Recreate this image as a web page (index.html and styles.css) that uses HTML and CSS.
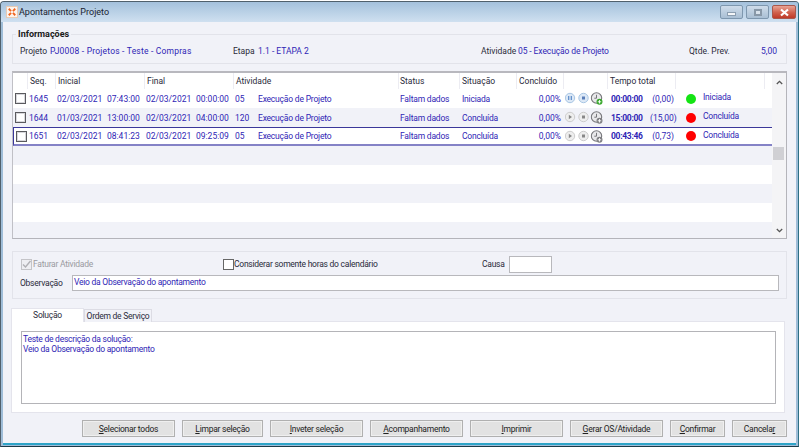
FILE: index.html
```html
<!DOCTYPE html>
<html lang="pt">
<head>
<meta charset="utf-8">
<title>Apontamentos Projeto</title>
<link rel="stylesheet" href="styles.css">
</head>
<body>
<svg class="defs" width="0" height="0">
  <defs>
    <symbol id="clock" viewBox="0 0 13 13">
      <circle cx="6" cy="6" r="5.200" fill="#e8e8ea" stroke="#77777b" stroke-width="1.100"/>
      <path d="M6 2.800V6.200H3.800" fill="none" stroke="#77777b" stroke-width="1"/>
    </symbol>
  </defs>
</svg>
<main class="window">
  <header class="titlebar">
    <svg class="appicon" width="12" height="12" viewBox="0 0 13 13"><rect x=".5" y=".5" width="12" height="12" fill="#fdf3ec" stroke="#e8c8b0"/><path d="M3 3l2.500 2.500M10 3L7.500 5.500M3 10l2.500-2.500M10 10L7.500 7.500" stroke="#f0641e" stroke-width="2"/></svg>
    <span class="wintitle">Apontamentos Projeto</span>
    <div class="wincontrols">
      <span class="winbtn"><i class="minglyph"></i></span>
      <span class="winbtn"><i class="maxglyph"></i></span>
      <span class="winbtn closebtn"><svg width="11" height="9" viewBox="0 0 11 9"><path d="M2 1.500l7 6M9 1.500l-7 6" stroke="#fff" stroke-width="2.200"/></svg></span>
    </div>
  </header>
  <div class="client">
    <section class="panel info">
      <h2 class="legend">Informações</h2>
      <div class="inforow">
        <span class="lbl l-proj">Projeto</span><span class="val v-proj">PJ0008 - Projetos - Teste - Compras</span>
        <span class="lbl l-etapa">Etapa</span><span class="val v-etapa">1.1 - ETAPA 2</span>
        <span class="lbl l-ativ">Atividade</span><span class="val v-ativ">05 - Execução de Projeto</span>
        <span class="lbl l-qtde">Qtde. Prev.</span><span class="val v-qtde">5,00</span>
      </div>
    </section>

    <section class="grid">
      <div class="gridbody">
        <div class="ghead">
          <span class="hc hc-check"></span><span class="hc hc-seq">Seq.</span><span class="hc hc-ini">Inicial</span><span class="hc hc-fin">Final</span><span class="hc hc-ativ">Atividade</span><span class="hc hc-status">Status</span><span class="hc hc-sit">Situação</span><span class="hc hc-conc">Concluído</span><span class="hc hc-ic"></span><span class="hc hc-tempo">Tempo total</span><span class="hc hc-ind"></span><span class="hc hc-last"></span>
        </div>

        <div class="row">
          <span class="cb"></span><span>1645</span><span>02/03/2021</span><span class="t">07:43:00</span><span>02/03/2021</span><span class="t">00:00:00</span><span>05</span><span class="tx">Execução de Projeto</span><span class="tx">Faltam dados</span><span class="tx">Iniciada</span><span class="pct">0,00%</span>
          <span class="icons">
            <svg width="38" height="13" viewBox="0 0 38 13"><circle cx="5" cy="6" r="4.700" fill="#dce8f6" stroke="#a8c6e4"/><path d="M3.700 4v4M6.300 4v4" stroke="#5a8ac8" stroke-width="1.200"/><circle cx="18.500" cy="6" r="4.700" fill="#dce8f6" stroke="#a8c6e4"/><rect x="17" y="4.500" width="3" height="3" fill="#5a7eb8"/><use href="#clock" x="25.500" y="0" width="13" height="13"/><circle cx="34.500" cy="9.800" r="3" fill="#3aa82e"/><path d="M32.800 9.800h3.400M34.500 8.100v3.400" stroke="#fff" stroke-width=".9"/></svg>
          </span>
          <span class="tt">00:00:00</span><span class="qty">(0,00)</span><span class="dot green"></span><span class="ind">Iniciada</span>
        </div>

        <div class="row alt">
          <span class="cb"></span><span>1644</span><span>01/03/2021</span><span class="t">13:00:00</span><span>02/03/2021</span><span class="t">04:00:00</span><span>120</span><span class="tx">Execução de Projeto</span><span class="tx">Faltam dados</span><span class="tx">Concluída</span><span class="pct">0,00%</span>
          <span class="icons">
            <svg width="38" height="13" viewBox="0 0 38 13"><circle cx="5" cy="6" r="4.700" fill="#eeeeee" stroke="#cccccc"/><path d="M3.800 3.800L7 6L3.800 8.200z" fill="#888"/><circle cx="18.500" cy="6" r="4.700" fill="#eeeeee" stroke="#cccccc"/><rect x="17" y="4.500" width="3" height="3" fill="#888"/><use href="#clock" x="25.500" y="0" width="13" height="13"/><circle cx="34.500" cy="9.800" r="3" fill="#808084"/><path d="M32.800 9.800h3.400M34.500 8.100v3.400" stroke="#fff" stroke-width=".9"/></svg>
          </span>
          <span class="tt">15:00:00</span><span class="qty">(15,00)</span><span class="dot red"></span><span class="ind">Concluída</span>
        </div>

        <div class="row selected">
          <span class="cb"></span><span>1651</span><span>02/03/2021</span><span class="t">08:41:23</span><span>02/03/2021</span><span class="t">09:25:09</span><span>05</span><span class="tx">Execução de Projeto</span><span class="tx">Faltam dados</span><span class="tx">Concluída</span><span class="pct">0,00%</span>
          <span class="icons">
            <svg width="38" height="13" viewBox="0 0 38 13"><circle cx="5" cy="6" r="4.700" fill="#eeeeee" stroke="#cccccc"/><path d="M3.800 3.800L7 6L3.800 8.200z" fill="#888"/><circle cx="18.500" cy="6" r="4.700" fill="#eeeeee" stroke="#cccccc"/><rect x="17" y="4.500" width="3" height="3" fill="#888"/><use href="#clock" x="25.500" y="0" width="13" height="13"/><circle cx="34.500" cy="9.800" r="3" fill="#808084"/><path d="M32.800 9.800h3.400M34.500 8.100v3.400" stroke="#fff" stroke-width=".9"/></svg>
          </span>
          <span class="tt">00:43:46</span><span class="qty">(0,73)</span><span class="dot red"></span><span class="ind">Concluída</span>
        </div>

        <div class="row alt"></div>
        <div class="row"></div>
        <div class="row alt"></div>
        <div class="row"></div>
        <div class="row alt tail"></div>
      </div>
      <div class="scrollbar">
        <svg class="arrow" width="7" height="5" viewBox="0 0 7 5"><path d="M.8 4L3.500 1.300 6.200 4" fill="none" stroke="#555" stroke-width="1.300"/></svg>
        <div class="thumb"></div>
        <svg class="arrow" width="7" height="5" viewBox="0 0 7 5"><path d="M.8 1L3.500 3.700 6.200 1" fill="none" stroke="#555" stroke-width="1.300"/></svg>
      </div>
    </section>

    <section class="panel options">
      <div class="optrow">
        <span class="chk checked"><svg width="11" height="11" viewBox="0 0 11 11"><path d="M2 5.500l2.500 2.500L9.500 2" fill="none" stroke="#b0b0b4" stroke-width="1.400"/></svg></span>
        <span class="disabled">Faturar Atividade</span>
        <span class="chk plain"></span>
        <span class="calendar">Considerar somente horas do calendário</span>
        <span class="lbl causa">Causa</span>
        <span class="input causainput"></span>
      </div>
      <div class="obsrow">
        <span class="lbl obslbl">Observação</span>
        <span class="input obsinput">Veio da Observação do apontamento</span>
      </div>
    </section>

    <section class="tabs">
      <div class="tabstrip">
        <span class="tab active">Solução</span>
        <span class="tab">Ordem de Serviço</span>
      </div>
      <div class="tabbody">
        <div class="memo">Teste de descrição da solução:<br>Veio da Observação do apontamento</div>
      </div>
    </section>

    <footer class="buttons">
      <button class="btn w93"><u>S</u>elecionar todos</button>
      <button class="btn w81"><u>L</u>impar seleção</button>
      <button class="btn w93"><u>I</u>nveter seleção</button>
      <button class="btn w93"><u>A</u>companhamento</button>
      <button class="btn w93"><u>I</u>mprimir</button>
      <button class="btn w93"><u>G</u>erar OS/Atividade</button>
      <button class="btn w55"><u>C</u>onfirmar</button>
      <button class="btn w55">Cancela<u>r</u></button>
    </footer>
  </div>
</main>
</body>
</html>
```
FILE: styles.css
```css
* { box-sizing: border-box; }
html, body { margin: 0; padding: 0; background: #fff; }
body { width: 800px; height: 448px; overflow: hidden; font-family: Roboto, "Open Sans", sans-serif; font-size: 8.5px; color: #2a2a3a; }
.defs { display: block; height: 0; }
.window { width: 799px; height: 446px; margin-top: 1px; border: 1px solid #50606c; border-right-color: #2c6f84; border-bottom-color: #1c3a48; border-radius: 4px 4px 0 0; background: #9fbdd8; display: flex; flex-direction: column; }
.titlebar { height: 20px; flex: none; display: flex; align-items: center; padding-left: 5px; background: linear-gradient(#a4c1dc, #cfe0f0); border-radius: 3px 3px 0 0; }
.appicon { flex: none; }
.wintitle { margin-left: 1px; font-size: 9px; color: #1a2430; }
.wincontrols { margin-left: auto; display: flex; gap: 3px; align-self: flex-start; margin-right: 2px; margin-top: 3px; }
.winbtn { width: 23px; height: 14px; border: 1px solid #7e97ae; border-radius: 2px; background: linear-gradient(#cfdcea, #a9bfd4); display: flex; align-items: center; justify-content: center; }
.closebtn { width: 24px; border-color: #a9584c; background: linear-gradient(#e9a394 0, #d0604c 55%, #bf3a28); }
.minglyph { width: 9px; height: 4px; margin-top: 3px; background: #f4f6f8; border: 1px solid #8c9eb0; }
.maxglyph { width: 8px; height: 7px; background: #d8e2ec; border: 2px solid #8898a8; }
.client { flex: 1; margin: 0 2px 1px 2px; padding: 0 9px; background: #f1f2f8; border-bottom: 2px solid #2ea4c8; display: flex; flex-direction: column; }
.panel { border: 1px solid #e2e3ea; }
.info { height: 30px; margin-top: 12px; }
.legend { display: inline-block; margin: -6px 0 0 3px; padding: 0 2px; height: 11px; line-height: 11px; background: #f1f2f8; font-size: 9px; font-weight: 700; color: #1a1a1a; vertical-align: top; }
.inforow { display: flex; margin-top: -1px; height: 14px; line-height: 14px; padding-left: 7px; }
.lbl { color: #2a2a3a; white-space: nowrap; }
.val { color: #2f25b5; white-space: nowrap; }
.l-proj { width: 30px; }
.v-proj { width: 183px; letter-spacing: .2px; }
.l-etapa { width: 25px; }
.v-etapa { width: 223px; }
.l-ativ { width: 37px; }
.v-ativ { width: 171px; letter-spacing: -.1px; }
.l-qtde { width: 72px; }
.grid { height: 168px; margin-top: 7px; display: flex; border: 1px solid #b4b4ba; border-left: 1px solid #c0c0c6; border-top: 2px solid #b8b8be; background: #f1f2f8; }
.gridbody { width: 759px; flex: none; }
.ghead { height: 16px; display: flex; background: #fff; line-height: 14px; }
.hc { flex: none; padding: 1px 0 0 2px; border-right: 1px solid #ececf2; height: 16px; white-space: nowrap; }
.hc-check { width: 15px; }
.hc-seq { width: 28px; }
.hc-ini { width: 89px; }
.hc-fin { width: 89px; }
.hc-ativ { width: 165px; }
.hc-status { width: 61px; padding-left: 1px; }
.hc-sit { width: 57px; }
.hc-conc { width: 47px; }
.hc-ic { width: 44px; }
.hc-tempo { width: 68px; }
.hc-ind { width: 89px; }
.hc-last { border-right: 0; }
.row { height: 19px; display: grid; grid-template-columns: 16px 28px 50px 39px 50px 39px 23px 142px 62px 57px 42px 49px 40px 24px 29px auto; align-items: center; background: #fff; color: #2f25b5; white-space: nowrap; line-height: 12px; }
.row.alt { background: #f1f2f8; }
.tail { height: 15px; }
.row.selected { background: #fff; border: 1px solid #3b389a; border-bottom: 2px solid #8482c6; margin-right: -1px; grid-template-columns: 15px 28px 50px 39px 50px 39px 23px 142px 62px 57px 42px 49px 40px 24px 29px auto; }
.tx { letter-spacing: -.2px; }
.t { text-align: right; padding-right: 7px; }
.pct { text-align: right; }
.icons { display: flex; padding-left: 4px; align-items: center; height: 13px; }
.tt { font-weight: 700; letter-spacing: -.3px; padding-left: 1px; }
.qty { text-align: right; }
.dot { width: 10px; height: 10px; border-radius: 50%; margin-left: 12px; }
.green { background: #14e414; }
.red { background: #ff0000; }
.ind { margin-top: -3px; letter-spacing: -.2px; }
.cb { width: 11px; height: 11px; margin-left: 2px; background: #fff; border: 1px solid #5a5a5e; box-shadow: inset 0 0 0 1px #d8d8dc; }
.scrollbar { flex: 1; background: #f4f4f6; display: flex; flex-direction: column; align-items: center; justify-content: space-between; padding: 7px 0 5px; position: relative; }
.thumb { position: absolute; top: 74px; left: 1px; right: 2px; height: 13px; background: #d0d0d4; }
.arrow { flex: none; }
.options { height: 48px; margin-top: 12px; padding: 4px 0 0 8px; letter-spacing: -.25px; }
.optrow { display: flex; align-items: center; height: 16px; }
.chk { width: 11px; height: 11px; flex: none; border: 1px solid #666; background: #fff; display: block; }
.checked { border-color: #c4c4c8; background: #eeeef2; }
.checked svg { display: block; margin: -1px; }
.plain { margin-left: 190px; }
.disabled { white-space: nowrap; color: #9a9aa0; margin-left: 1px; flex: none; width: 0; }
.calendar { margin-left: 0; width: 248px; white-space: nowrap; flex: none; }
.causa { width: 27px; flex: none; }
.input { display: block; background: #fff; border: 1px solid #b8b8bc; white-space: nowrap; }
.causainput { width: 43px; height: 17px; margin-top: 1px; }
.obsrow { display: flex; align-items: center; margin-top: 3px; margin-left: -1px; }
.obslbl { width: 52px; flex: none; }
.obsinput { width: 707px; height: 16px; line-height: 13px; padding-left: 1px; color: #2f25b5; }
.tabs { margin-top: 9px; margin-left: -1px; letter-spacing: -.25px; }
.tabstrip { display: flex; height: 14px; align-items: flex-end; position: relative; z-index: 1; margin-bottom: -1px; }
.tab { height: 13px; line-height: 13px; width: 68px; text-align: center; background: #f1f2f8; border: 1px solid #dcdce4; border-bottom: 0; white-space: nowrap; }
.tab.active { width: 73px; height: 14px; line-height: 13px; background: #fff; border-color: #e4e4ec; }
.tabbody { height: 92px; width: 774px; background: #fff; border: 1px solid #e4e4ec; padding: 9px 8px 0 9px; }
.memo { height: 73px; border: 1px solid #b4b4b8; color: #2f25b5; padding: 2px 1px; line-height: 10px; }
.buttons { display: flex; gap: 7px; justify-content: flex-end; margin-top: 7px; }
.btn { height: 17px; padding: 0; background: #e2e2e2; border: 1px solid #b0b0b0; box-shadow: inset 0 0 0 1px #efefef; font-family: Roboto, sans-serif; font-size: 8.5px; letter-spacing: -.25px; color: #222; }
.w93 { width: 93px; }
.w81 { width: 81px; }
.w55 { width: 55px; }
```
